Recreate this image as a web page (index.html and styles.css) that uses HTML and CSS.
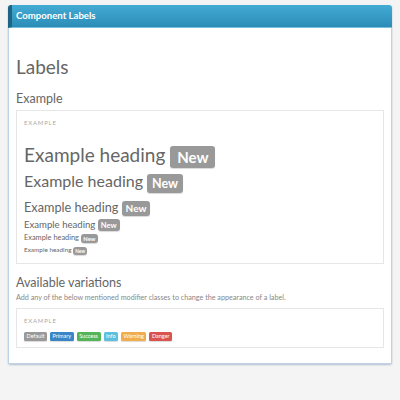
FILE: index.html
```html
<!DOCTYPE html>
<html>
<head>
<meta charset="utf-8">
<link rel="stylesheet" href="styles.css">
</head>
<body>
<div class="panel">
  <div class="panel-head">Component Labels</div>
  <div class="panel-body">
    <h1 class="page-title">Labels</h1>
    <h3 class="section-title">Example</h3>
    <div class="example">
      <div class="example-tag">EXAMPLE</div>
      <div class="hx h1">Example heading <span class="label">New</span></div>
      <div class="hx h2">Example heading <span class="label">New</span></div>
      <div class="hx h3">Example heading <span class="label">New</span></div>
      <div class="hx h4">Example heading <span class="label">New</span></div>
      <div class="hx h5">Example heading <span class="label">New</span></div>
      <div class="hx h6">Example heading <span class="label">New</span></div>
    </div>
    <h3 class="section-title variations">Available variations</h3>
    <p class="desc">Add any of the below mentioned modifier classes to change the appearance of a label.</p>
    <div class="example small">
      <div class="example-tag">EXAMPLE</div>
      <div class="label-row">
        <span class="label sm default">Default</span>
        <span class="label sm primary">Primary</span>
        <span class="label sm success">Success</span>
        <span class="label sm info">Info</span>
        <span class="label sm warning">Warning</span>
        <span class="label sm danger">Danger</span>
      </div>
    </div>
  </div>
</div>
</body>
</html>
```

FILE: styles.css
```css
html, body {
  margin: 0;
  padding: 0;
  background: #f4f4f4;
}
body {
  padding: 5px 8px;
  font-family: Lato, "Open Sans", sans-serif;
  color: #666;
}
.panel {
  width: 384px;
  border-radius: 3px;
  box-shadow: 0 1px 2px rgba(60, 90, 130, 0.35);
}
.panel-head {
  height: 23px;
  box-sizing: border-box;
  background: linear-gradient(#43abd4, #2b8db7);
  border-left: 4px solid #1e6585;
  border-radius: 3px 3px 0 0;
  padding-left: 4px;
  color: #fff;
  font-size: 9.6px;
  font-weight: 700;
  line-height: 22px;
  border-bottom: 1px solid #7ac0dd;
}
.panel-body {
  background: #fff;
  border: 1px solid #bcd3e8;
  border-top: none;
  padding: 1px 7px 15px;
  display: flow-root;
}
.page-title {
  margin: 27px 0 0;
  font-size: 19px;
  font-weight: 400;
  line-height: 22px;
  color: #666;
}
.section-title {
  margin: 13px 0 0;
  font-size: 12.5px;
  font-weight: 400;
  line-height: 15px;
  color: #666;
}
.example {
  margin-top: 4px;
  border: 1px solid #e6e6e6;
  padding: 8px 7px 5px;
}
.example-tag {
  font-size: 6px;
  letter-spacing: 0.8px;
  color: #aaa;
  line-height: 8px;
}
.hx {
  color: #666;
  font-weight: 400;
  white-space: nowrap;
}
.label {
  display: inline-block;
  background: #999;
  color: #fff;
  font-weight: 700;
  border-radius: 3px;
  vertical-align: middle;
  box-shadow: 0 1px 1px rgba(0,0,0,0.15);
}
.h1 { font-size: 19px; line-height: 24px; margin-top: 16px; }
.h1 .label { font-size: 15px; padding: 2px 7px; line-height: 18px; }
.h2 { font-size: 16px; line-height: 20px; margin-top: 3px; }
.h2 .label { font-size: 12.5px; padding: 2px 5px; line-height: 15px; }
.h3 { font-size: 12.7px; line-height: 16px; margin-top: 6px; }
.h3 .label { font-size: 10px; padding: 1px 4px; line-height: 13px; }
.h4 { font-size: 9.6px; line-height: 13px; margin-top: 2px; }
.h4 .label { font-size: 7.6px; padding: 1px 3px; line-height: 10px; }
.h5 { font-size: 7.4px; line-height: 10px; margin-top: 2px; }
.h5 .label { font-size: 5.8px; padding: 1px 2.5px; line-height: 7px; }
.h6 { font-size: 6.4px; line-height: 9px; margin-top: 2px; margin-bottom: 3px; }
.h6 .label { font-size: 4.8px; padding: 1px 2px; line-height: 6px; }
.variations {
  margin-top: 11px;
}
.desc {
  margin: 3px 0 0;
  font-size: 7.2px;
  line-height: 10px;
  color: #888;
}
.example.small {
  margin-top: 5px;
  padding: 8px 7px 6px;
}
.label-row {
  display: flex;
  gap: 3px;
  margin-top: 7px;
}
.label.sm {
  font-size: 5.5px;
  line-height: 8px;
  padding: 0.5px 2.5px;
  border-radius: 1.5px;
  font-weight: 400;
}
.default { background: #999; }
.primary { background: #3a85c6; }
.success { background: #53b557; }
.info { background: #5bc0de; }
.warning { background: #f0ad4e; }
.danger { background: #d9534f; }
```
